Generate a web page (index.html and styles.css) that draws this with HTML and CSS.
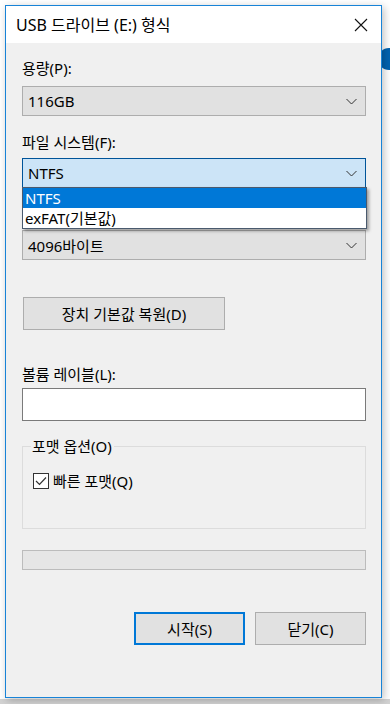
FILE: index.html
```html
<!DOCTYPE html>
<html lang="ko">
<head>
    <meta charset="UTF-8">
    <meta name="viewport" content="width=device-width, initial-scale=1.0">
    <title>USB 드라이브 (E:) 형식</title>
    <link rel="stylesheet" href="styles.css">
</head>
<body>
    <div class="backdrop-dot"></div>
    <div class="dialog">
        <div class="title-bar">
            <span class="title">USB 드라이브 (E:) 형식</span>
            <svg class="close" width="14" height="14" viewBox="0 0 14 14">
                <path d="M1 1 L13 13 M13 1 L1 13" stroke="#111" stroke-width="1.1" fill="none"/>
            </svg>
        </div>

        <div class="body">
            <div class="label">용량(P):</div>
            <div class="combo">
                <span>116GB</span>
                <svg class="chevron" width="11" height="7" viewBox="0 0 11 7"><path d="M0.5 1 L5.5 6 L10.5 1" stroke="#333" fill="none"/></svg>
            </div>

            <div class="label gap">파일 시스템(F):</div>
            <div class="combo-wrap">
                <div class="combo focused">
                    <span>NTFS</span>
                    <svg class="chevron" width="11" height="7" viewBox="0 0 11 7"><path d="M0.5 1 L5.5 6 L10.5 1" stroke="#333" fill="none"/></svg>
                </div>
                <ul class="dropdown">
                    <li class="selected">NTFS</li>
                    <li>exFAT(기본값)</li>
                </ul>
            </div>

            <!-- allocation size label sits under the open list -->
            <div class="label gap"></div>
            <div class="combo">
                <span>4096바이트</span>
                <svg class="chevron" width="11" height="7" viewBox="0 0 11 7"><path d="M0.5 1 L5.5 6 L10.5 1" stroke="#333" fill="none"/></svg>
            </div>

            <button class="btn restore">장치 기본값 복원(D)</button>

            <div class="label volume">볼륨 레이블(L):</div>
            <input class="textbox" type="text">

            <fieldset class="group">
                <legend>포맷 옵션(O)</legend>
                <label class="check">
                    <span class="box">
                        <svg width="12" height="10" viewBox="0 0 12 10"><path d="M1 5 L4.5 8.5 L11 1.5" stroke="#333" stroke-width="1.2" fill="none"/></svg>
                    </span>
                    빠른 포맷(Q)
                </label>
            </fieldset>

            <div class="progress"></div>

            <div class="actions">
                <button class="btn primary">시작(S)</button>
                <button class="btn">닫기(C)</button>
            </div>
        </div>
    </div>
</body>
</html>
```

FILE: styles.css
```css
body {
    margin: 0;
    height: 704px;
    overflow: hidden;
    background: linear-gradient(#ffffff 0, #ffffff 699px, #d2d2d2 699px);
    font-family: "Noto Sans", "Noto Sans CJK KR", sans-serif;
    font-size: 15px;
    color: #000000;
    position: relative;
}

.backdrop-dot {
    position: absolute;
    left: 378px;
    top: 48px;
    width: 22px;
    height: 22px;
    border-radius: 50%;
    background-color: #0063b1;
}

.dialog {
    position: relative;
    margin: 5px 0 0 5px;
    width: 375px;
    height: 691px;
    border: 1px solid #1883d7;
    background-color: #f0f0f0;
    box-shadow: 2px 2px 8px rgba(0, 0, 0, 0.25);
    display: flex;
    flex-direction: column;
}

.title-bar {
    height: 37px;
    background-color: #ffffff;
    display: flex;
    align-items: center;
    justify-content: space-between;
    padding: 0 13px 0 10px;
}

.title {
    font-size: 16px;
    margin-top: -1px;
}

.close {
    margin-top: 1px;
}

.body {
    padding: 15px 15px 0 16px;
    display: flex;
    flex-direction: column;
}

.label {
    height: 20px;
    line-height: 20px;
    margin-bottom: 8px;
}

.label.gap {
    margin-top: 16px;
    margin-bottom: 6px;
}

.combo {
    height: 28px;
    border: 1px solid #adadad;
    background-color: #e1e1e1;
    display: flex;
    align-items: center;
    justify-content: space-between;
    padding: 0 8px 0 5px;
}

.combo.focused {
    background-color: #cce4f7;
    border-color: #005499;
}

.chevron {
    margin-top: 1px;
}

.combo-wrap {
    position: relative;
    z-index: 2;
}

.dropdown {
    position: absolute;
    left: 0;
    top: 29px;
    width: 343px;
    margin: 0;
    padding: 0;
    list-style: none;
    border: 1px solid #4a5a6e;
    background-color: #ffffff;
    box-shadow: 2px 2px 3px rgba(0, 0, 0, 0.35);
}

.dropdown li {
    height: 20px;
    line-height: 20px;
    padding-left: 2px;
}

.dropdown li.selected {
    background-color: #0078d7;
    color: #ffffff;
}

.btn {
    font-family: inherit;
    font-size: 15px;
    color: #000000;
    height: 33px;
    background-color: #e1e1e1;
    border: 1px solid #adadad;
    padding: 0;
}

.restore {
    width: 202px;
    margin: 37px 0 0 1px;
}

.volume {
    margin-top: 34px;
    margin-bottom: 4px;
}

.textbox {
    height: 33px;
    box-sizing: border-box;
    border: 1px solid #7a7a7a;
    background-color: #ffffff;
    margin: 0;
    padding: 0 4px;
}

.group {
    margin: 15px 0 0 0;
    border: 1px solid #dcdcdc;
    padding: 14px 10px 0 10px;
    height: 77px;
}

.group legend {
    padding: 0 2px 0 1px;
    margin-left: -2px;
    line-height: 20px;
}

.check {
    display: flex;
    align-items: center;
    gap: 4px;
}

.box {
    width: 14px;
    height: 14px;
    border: 1px solid #333333;
    background-color: #ffffff;
    display: flex;
    align-items: center;
    justify-content: center;
}

.progress {
    margin-top: 21px;
    height: 18px;
    border: 1px solid #bcbcbc;
    background-color: #e6e6e6;
}

.actions {
    margin-top: 42px;
    display: flex;
    justify-content: flex-end;
    gap: 10px;
}

.actions .btn {
    width: 111px;
}

.btn.primary {
    border: 2px solid #0078d7;
}
```
